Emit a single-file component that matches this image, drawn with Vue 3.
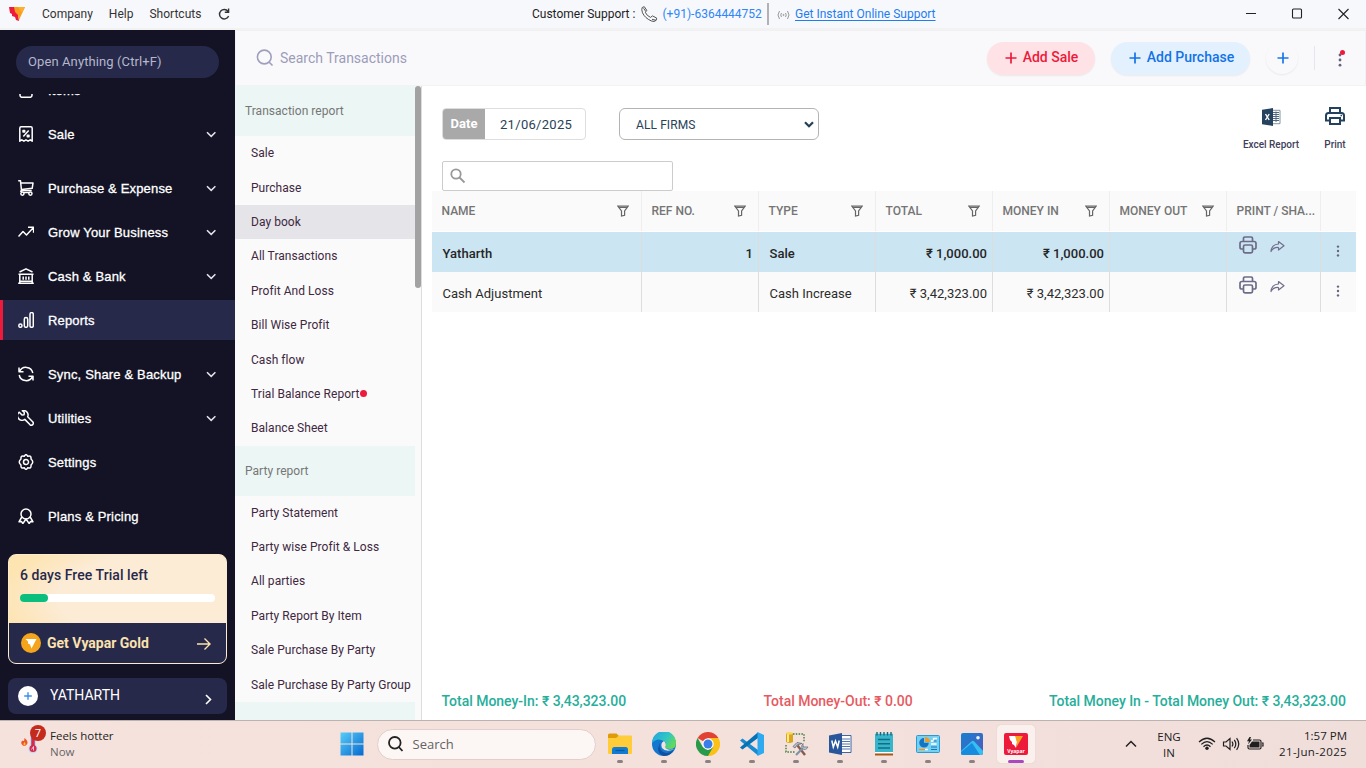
<script setup>
const chevron = 'M1 1.2 5.2 5.4 9.4 1.2'
const groups = [
  [{ label: 'Items', icon: 'items', open: true }],
  [{ label: 'Sale', icon: 'sale', open: true }],
  [
    { label: 'Purchase & Expense', icon: 'cart', open: true },
    { label: 'Grow Your Business', icon: 'grow', open: true },
    { label: 'Cash & Bank', icon: 'bank', open: true },
    { label: 'Reports', icon: 'bars', active: true },
  ],
  [
    { label: 'Sync, Share & Backup', icon: 'sync', open: true },
    { label: 'Utilities', icon: 'wrench', open: true },
    { label: 'Settings', icon: 'gear' },
  ],
  [{ label: 'Plans & Pricing', icon: 'badge' }],
]
const icons = {
  items: ['M2 2h12v11.300a2 2 0 0 1-2 2H4a2 2 0 0 1-2-2z'],
  sale: ['M1.800 15.200V2.200Q1.800.8 3.200.8h9.600q1.400 0 1.400 1.400v13l-2-1.400-2.100 1.400L8 13.800l-2.100 1.400-2.100-1.400z', 'M10.700 4.500 5.300 10.500', 'M5 4.500h1.700v1.500H5zM9.300 9.200h1.700v1.500H9.300z'],
  cart: ['M.2.8h2.300l1 9.700h10.200', 'M3 3h12l-.8 5.300-10.700 1.200', 'M3.500 10.500l-1 1.500M6 13.600a1.600 1.600 0 1 1-3.200 0 1.600 1.600 0 0 1 3.200 0zM14 13.600a1.600 1.600 0 1 1-3.200 0 1.600 1.600 0 0 1 3.200 0zM6 12.600h5'],
  grow: ['M.5 12.500 5 7.500l3.500 3.500 7-7.500M10 3.300h5.600v5.500'],
  bank: ['M1.500 4 8 .8 14.500 4M.5 6.300h15M1.800 6.300v8.200M14.200 6.300v8.200M.2 15.200h15.600M1.800 13.300h12.400', 'M5.200 8.500v3.300M8 8.500v3.300M10.800 8.500v3.300'],
  bars: ['M4 13.700a1.600 1.600 0 1 1-3.200 0 1.600 1.600 0 0 1 3.200 0zM6.300 7.200q0-1.600 1.700-1.600t1.700 1.600v6.500q0 1.600-1.700 1.600t-1.700-1.600zM12 2.200Q12 .6 13.600.6t1.700 1.600v11.500q0 1.600-1.700 1.600T12 13.700z'],
  sync: ['M1 1.500v4.300h4.500M1.500 5.600A7 7 0 0 1 14.800 7', 'M15 14.500v-4.300h-4.500M14.500 10.400A7 7 0 0 1 1.200 9'],
  wrench: ['M1.300 2.200 4 5l2.100-.2L6.300 2.500 4.300.8a4.400 4.400 0 0 1 5.400 5.900l5.200 5.300a2 2 0 0 1-2.800 2.800L6.800 9.400A4.400 4.400 0 0 1 1.300 2.200z'],
  gear: ['M6.200 2.300Q8-1 9.800 2.300 13.500 1 13 5q3.500 3 0 6 .5 4-3.200 2.700Q8 17 6.200 13.700 2.500 15 3 11q-3.500-3 0-6-.5-4 3.200-2.700z', 'M10.500 8a2.500 2.500 0 1 1-5 0 2.500 2.500 0 0 1 5 0z'],
  badge: ['M13 6a5 5 0 1 1-10 0 5 5 0 0 1 10 0z', 'M3.800 9 1 13.800l2.600-.2L4.800 15.600 8 11l3.200 4.600 1.200-2 2.600.2L12.200 9'],
}
const reports = [
  { title: 'Transaction report', items: ['Sale', 'Purchase', 'Day book', 'All Transactions', 'Profit And Loss', 'Bill Wise Profit', 'Cash flow', 'Trial Balance Report', 'Balance Sheet'] },
  { title: 'Party report', items: ['Party Statement', 'Party wise Profit & Loss', 'All parties', 'Party Report By Item', 'Sale Purchase By Party', 'Sale Purchase By Party Group'] },
]
const columns = ['NAME', 'REF NO.', 'TYPE', 'TOTAL', 'MONEY IN', 'MONEY OUT']
const rows = [
  { name: 'Yatharth', ref: '1', type: 'Sale', total: '₹ 1,000.00', moneyIn: '₹ 1,000.00', selected: true },
  { name: 'Cash Adjustment', ref: '', type: 'Cash Increase', total: '₹ 3,42,323.00', moneyIn: '₹ 3,42,323.00' },
]
</script>

<template>
  <div class="screen">
    <header class="titlebar">
      <svg class="brand" width="16" height="15" viewBox="0 0 16 15">
        <path d="M0 0h8l2 14-3-1-1-3-3-1V7L1 6z" fill="#ed1a3b" />
        <path d="M5 0h11l-6 13-1-5-3-3z" fill="#f99d1c" /><path d="M9 0h7l-3 6z" fill="#fbb12f" />
      </svg>
      <nav class="menus"><span>Company</span><span>Help</span><span>Shortcuts</span></nav>
      <svg class="reload" width="12" height="13" viewBox="0 0 12 13" fill="none" stroke="#333" stroke-width="1.4"><path d="M10 3.4A4.7 4.7 0 1 0 10.6 8M10.6.6v3.7H6.8" /></svg>
      <div class="support">
        <span class="cs">Customer Support :</span>
        <svg width="17" height="17" viewBox="0 0 17 17" fill="none" stroke="#555" stroke-width="1"><path d="M1.2 1.5 3.3.7l2.6 3.8-1.7 1.7q1.5 3.5 5.3 5.2l2-1.5 4.2 2.2-.5 2.2q-2 2.1-5 .6Q3.800 12 1.500 6.800.2 3.300 1.200 1.500zM2.600 2.300l2.200 3.200M11 13.300l4 1" /></svg>
        <span class="tel">(+91)-6364444752</span>
        <i class="bar"></i>
        <svg class="live" width="13" height="10" viewBox="0 0 13 10" fill="none" stroke="#999" stroke-width="1"><path d="M2.500 1Q-.5 5 2.500 9M4.500 3Q3 5 4.500 7M8.500 3Q10 5 8.500 7M10.500 1Q13.500 5 10.500 9" /><circle cx="6.500" cy="5" r=".6" /></svg>
        <span class="help">Get Instant Online Support</span>
      </div>
      <svg class="winctl" width="104" height="12" viewBox="0 0 104 12" fill="none" stroke="#222" stroke-width="1.100"><path d="M0 5.500h10M92.500 1l10 10M102.500 1l-10 10" /><rect x="46.500" y="1" width="9" height="9" rx="1" /></svg>
    </header>

    <div class="body">
      <aside class="sidebar">
        <div class="open">Open Anything (Ctrl+F)</div>
        <div class="navclip">
          <div class="nav">
            <div v-for="(g, i) in groups" :key="i" class="group">
              <div v-for="it in g" :key="it.label" class="item" :class="{ active: it.active }">
                <svg width="16" height="16" viewBox="0 0 16 16" fill="none" stroke="#fff" stroke-width="1.500" stroke-linejoin="round">
                  <path v-for="d in icons[it.icon]" :key="d" :d="d" />
                </svg>
                <span>{{ it.label }}</span>
                <svg v-if="it.open" class="chev" width="11" height="7" viewBox="0 0 11 7" fill="none" stroke="#e4e4ec" stroke-width="1.500"><path :d="chevron" /></svg>
              </div>
            </div>
          </div>
        </div>
        <div class="trial">
          <div class="days">6 days Free Trial left</div>
          <div class="progress"><i></i></div>
          <div class="gold">
            <svg width="20" height="20" viewBox="0 0 20 20"><circle cx="10" cy="10" r="10" fill="#f5a51b" /><path d="M4.500 6h11l-5 9.500-1.500-4-2-1V8.500z" fill="#fff" /></svg>
            <span>Get Vyapar Gold</span>
            <svg class="arrow" width="14" height="12" viewBox="0 0 14 12" fill="none" stroke="#fbe2ae" stroke-width="1.400"><path d="M0 6h13M7.500.5 13 6l-5.500 5.500" /></svg>
          </div>
        </div>
        <div class="firm">
          <svg width="20" height="20" viewBox="0 0 20 20"><circle cx="10" cy="10" r="10" fill="#fff" /><path d="M6.200 10h7.600M10 6.200v7.600" stroke="#3b8fec" stroke-width="1.400" /></svg>
          <span>YATHARTH</span>
          <svg class="next" width="7" height="11" viewBox="0 0 7 11" fill="none" stroke="#fff" stroke-width="1.600"><path d="M1 1l4.500 4.500L1 10" /></svg>
        </div>
      </aside>

      <section class="app">
        <div class="topbar">
          <svg width="18" height="18" viewBox="0 0 18 18" fill="none" stroke="#9f9fbd" stroke-width="1.600"><circle cx="8.300" cy="8" r="6.900" /><path d="M13 13l3.500 3.500" /></svg>
          <span class="ph">Search Transactions</span>
          <div class="pill sale"><svg width="12" height="12" viewBox="0 0 12 12" stroke="currentColor" stroke-width="1.700"><path d="M.5 6h11M6 .5v11" /></svg>Add Sale</div>
          <div class="pill purchase"><svg width="12" height="12" viewBox="0 0 12 12" stroke="currentColor" stroke-width="1.700"><path d="M.5 6h11M6 .5v11" /></svg>Add Purchase</div>
          <div class="round"><svg width="12" height="12" viewBox="0 0 12 12" stroke="#1878ea" stroke-width="1.700"><path d="M.5 6h11M6 .5v11" /></svg></div>
          <i class="rule"></i>
          <svg class="more" width="10" height="20" viewBox="0 0 10 20"><g fill="#62627c"><circle cx="3" cy="7" r="1.400" /><circle cx="3" cy="12" r="1.400" /><circle cx="3" cy="17.200" r="1.400" /></g><circle cx="5.500" cy="4.500" r="2.500" fill="#ed1a3b" /></svg>
        </div>

        <div class="workspace">
          <div class="reports">
            <div v-for="g in reports" :key="g.title">
              <div class="rtitle">{{ g.title }}</div>
              <div v-for="r in g.items" :key="r" class="report" :class="{ current: r === 'Day book' }">{{ r }}<i v-if="r === 'Trial Balance Report'"></i></div>
            </div>
            <div class="rtitle"></div>
          </div>
          <div class="track"><i></i></div>

          <main class="main">
            <div class="filters">
              <div class="date"><b>Date</b><span>21/06/2025</span></div>
              <div class="select"><span>ALL FIRMS</span><svg width="10" height="7" viewBox="0 0 10 7" fill="none" stroke="#234057" stroke-width="2.200"><path d="M1 1.200l4 4 4-4" /></svg></div>
              <div class="action excel">
                <svg width="19" height="18" viewBox="0 0 19 18"><path d="M10 2.300h8v13.400h-8" fill="#fff" stroke="#65788a" stroke-width=".8" /><path d="M11 4.500h6M11 6.500h6M11 8.500h6M11 10.500h6M11 12.500h6M14 3.500v10.500" stroke="#536a80" /><path d="M0 1.800 11 0v18L0 16.200z" fill="#26425e" /><path d="M3.500 6 7.200 12M7.200 6 3.500 12" stroke="#fff" stroke-width="1.400" /></svg>
                <span>Excel Report</span>
              </div>
              <div class="action print">
                <svg width="20" height="18" viewBox="0 0 20 18" fill="none" stroke="#24425e" stroke-width="2"><path d="M5 6V1h10v5M5 13.500H1V8.500Q1 6 3.500 6h13Q19 6 19 8.500v5h-4M5 11h10v6H5z" /><path d="M15.500 8.500h1.500" stroke-width="1.500" /></svg>
                <span>Print</span>
              </div>
            </div>
            <div class="find"><svg width="16" height="16" viewBox="0 0 16 16" fill="none" stroke="#999" stroke-width="1.800"><circle cx="6" cy="6" r="4.700" /><path d="M9.500 9.500l5 5" /></svg></div>

            <div class="grid">
              <div class="row head">
                <div v-for="c in columns" :key="c" class="cell"><span>{{ c }}</span><svg width="12" height="12" viewBox="0 0 12 12" fill="none" stroke="#666" stroke-width="1.200"><path d="M.8 1h10.400L7.600 6v4.300L4.500 11V6zM1.500 2.400h9" /></svg></div>
                <div class="cell"><span>PRINT / SHA...</span></div>
                <div class="cell"></div>
              </div>
              <div v-for="r in rows" :key="r.name" class="row" :class="{ selected: r.selected }">
                <div class="cell">{{ r.name }}</div>
                <div class="cell num">{{ r.ref }}</div>
                <div class="cell">{{ r.type }}</div>
                <div class="cell num">{{ r.total }}</div>
                <div class="cell num">{{ r.moneyIn }}</div>
                <div class="cell"></div>
                <div class="cell tools">
                  <svg width="18" height="18" viewBox="0 0 18 18" fill="none" stroke="#6c6c89" stroke-width="1.700" stroke-linejoin="round"><path d="M4.500 5.500V2.300Q4.500 1 5.800 1h6.400q1.300 0 1.300 1.300v3.200M4.500 13H2.800Q1 13 1 11.200V7.500q0-2 2-2h12q2 0 2 2v3.700q0 1.800-1.800 1.800h-1.700M6 9h6q1.500 0 1.500 1.500v4.800q0 1.500-1.500 1.500H6q-1.500 0-1.500-1.500v-4.800Q4.500 9 6 9z" /></svg>
                  <svg width="15" height="13" viewBox="0 0 15 13" fill="none" stroke="#6f6f8c" stroke-width="1.200" stroke-linejoin="round"><path d="M8.500 1.500 14 5.800 8.500 10V7.500Q3.500 7 1 11.500 1.500 4.500 8.500 4z" /></svg>
                </div>
                <div class="cell dots"><svg width="4" height="12" viewBox="0 0 4 12" fill="#66667f"><circle cx="2" cy="1.600" r="1.200" /><circle cx="2" cy="6" r="1.200" /><circle cx="2" cy="10.400" r="1.200" /></svg></div>
              </div>
            </div>

            <footer class="totals">
              <span>Total Money-In: ₹ 3,43,323.00</span>
              <span class="out">Total Money-Out: ₹ 0.00</span>
              <span class="net">Total Money In - Total Money Out: ₹ 3,43,323.00</span>
            </footer>
          </main>
        </div>
      </section>
    </div>

    <div class="taskbar">
      <div class="weather">
        <svg width="28" height="28" viewBox="0 0 28 28"><path d="M4.500 9q4 3 2.700 6-3 4-5.700 0-1-3 1.500-3.500.5 1 1.200 0z" fill="#ed5527" /><path d="M4.500 13q2 2 0 3.500-2-1 0-3.500" fill="#ffc43c" /><path d="M10 6h6v10q3 4 0 7-3 2.500-6.500 0-2.500-4 .5-7z" fill="#bddcf5" /><path d="M13 7v12" stroke="#d52a4d" stroke-width="3.500" /><circle cx="13" cy="19.500" r="3.500" fill="#d52a4d" /><path d="M11.500 20.500l2-3v4" fill="none" stroke="#fff" stroke-width=".7" /></svg>
        <b>7</b>
        <div><span>Feels hotter</span><span class="now">Now</span></div>
      </div>

      <div class="dock">
        <svg class="win" width="24" height="24" viewBox="0 0 24 24"><defs><linearGradient id="w" x2="1" y2="1"><stop stop-color="#56cdf9" /><stop offset="1" stop-color="#0669cf" /></linearGradient></defs><path d="M.5.5h11v11H.5zM12.500.5h11v11h-11zM.5 12.500h11v11H.5zM12.500 12.500h11v11h-11z" fill="url(#w)" /></svg>
        <div class="search"><svg width="15" height="16" viewBox="0 0 15 16" fill="none" stroke="#222" stroke-width="1.800"><circle cx="6.800" cy="6.800" r="5.800" /><path d="M10.800 11l3.700 4" /></svg><span>Search</span></div>
        <div class="apps">
          <div class="tile"><svg width="24" height="24" viewBox="0 0 24 24"><path d="M0 3q0-1.500 1.500-1.500h7L11 4v5H0z" fill="#e09c08" /><path d="M0 6h8l3-2.500h12q1 0 1 1V21q0 1-1 1H1q-1 0-1-1z" fill="#ffcc3a" /><path d="M4 22v-4.500q0-2.500 2.500-2.500h11q2.500 0 2.500 2.500V22z" fill="#137bd1" /><path d="M7.500 18.500h9" stroke="#075b9d" stroke-width="1.200" /></svg><i></i></div>
          <div class="tile"><svg width="24" height="24" viewBox="0 0 24 24"><defs><linearGradient id="e" y2=".6"><stop stop-color="#259fe2" /><stop offset=".6" stop-color="#31c6c5" /><stop offset="1" stop-color="#65d958" /></linearGradient></defs><circle cx="12" cy="12" r="12" fill="#1177cf" /><path d="M0 11A12 12 0 0 1 24 11q0 6-6 6-6 0-5-3 2-3-1-5Q5 5 0 11z" fill="url(#e)" /><path d="M8 11q-2 8 6 10 5 0 8-4-3 7-10 7Q3 21 8 11z" fill="#124f9e" /><path d="M12 9q-4 2-2 7 4 5 13 1-8 2-10-2 2-3-1-6" fill="#f6e2dd" /></svg><i></i></div>
          <div class="tile"><svg width="24" height="24" viewBox="0 0 24 24"><path d="M12 12 1.600 6A12 12 0 0 1 22.400 6z" fill="#e24234" /><path d="M12 12V6h10.400A12 12 0 0 1 12 24z" fill="#fbc116" /><path d="M1.600 6 6.800 15 12 18l5.200-3L12 24A12 12 0 0 1 1.600 6z" fill="#29994a" /><circle cx="12" cy="12" r="5.700" fill="#fff" /><circle cx="12" cy="12" r="4.500" fill="#3b7eea" /></svg><i></i></div>
          <div class="tile"><svg width="24" height="24" viewBox="0 0 24 24"><path d="M0 8.500 2.500 6.500 18 18v5.500z" fill="#168bd2" /><path d="M0 15.500 2.500 17.500 18 6V.3z" fill="#0872b7" /><path d="M17.500 0 24 3v18l-6.500 3z" fill="#2daaf0" /></svg><i></i></div>
          <div class="tile"><svg width="26" height="26" viewBox="0 0 26 26"><path d="M10 3h11v8M3 14v7h9" fill="none" stroke="#3f7d35" stroke-width="1.400" stroke-dasharray="1.500 1.300" /><path d="M3 2h7v9q-3.500 2-7 0z" fill="#d8a61c" /><path d="M5 3v8" stroke="#ffe98b" stroke-width="2" /><ellipse cx="6.500" cy="2.300" rx="3.500" ry="1.300" fill="#f7d860" /><path d="M22 24 14.500 14.500" stroke="#8a5a48" stroke-width="2.400" /><path d="M13 24 21 16" stroke="#7b93a8" stroke-width="2.200" /><path d="M10 15.500l4-4 5 1-5 1.500-2 3z" fill="#b9c6d2" stroke="#5d6a76" stroke-width=".8" /><path d="M20 12.500v3.500h5q-2 4-6 1.500-1-3 1-5" fill="#c3cdd6" stroke="#66727d" stroke-width=".8" /></svg><i></i></div>
          <div class="tile"><svg width="24" height="24" viewBox="0 0 24 24"><path d="M12 3.500h11v17H12z" fill="#fff" stroke="#2b579a" stroke-width=".9" /><path d="M14 7h8M14 9.500h8M14 12h8M14 14.500h8M14 17h8" stroke="#5277ad" /><path d="M1 3.500 14 1v22L1 20.500z" fill="#29569b" /><path d="M3.800 8.500 5.300 15 7.500 9 9.700 15 11.200 8.500" fill="none" stroke="#fff" stroke-width="1.500" /></svg><i></i></div>
          <div class="tile"><svg width="24" height="24" viewBox="0 0 24 24"><path d="M3 1.800h18V21H3z" fill="#36b5cb" /><path d="M5 0v3.500M8.500 0v3.500M12 0v3.500M15.500 0v3.500M19 0v3.500" stroke="#17677c" stroke-width="1.400" /><path d="M6 7.500h12M6 11.800h12M6 16h12" stroke="#126f83" stroke-width="1.400" /><path d="M3 20h18v1.500H3z" fill="#fff" /><path d="M3 21.500h18v2H3z" fill="#a45a16" /></svg><i></i></div>
          <div class="tile"><svg width="24" height="24" viewBox="0 0 24 24"><rect x=".5" y="3.500" width="23" height="17" rx="1" fill="#74d1f2" stroke="#2a9ad4" /><path d="M8 6a4.800 4.800 0 1 0 4.800 4.800H8z" fill="#1674c2" /><path d="M9 5a5 5 0 0 1 5 5H9z" fill="#f39a20" /><path d="M15 9h2.500V6.500h3.500M15 12h5.500M3 17.500h9" fill="none" stroke="#fff" stroke-width="1.300" /><path d="M3 17.500h6" stroke="#ef9222" stroke-width="1.600" /><path d="M15 15h6M15 17.500h6M17.500 9h3" stroke="#1976bb" /></svg><i></i></div>
          <div class="tile"><svg width="24" height="24" viewBox="0 0 24 24"><defs><linearGradient id="p" x2="1" y2="1"><stop stop-color="#1681d2" /><stop offset="1" stop-color="#5259b8" /></linearGradient><clipPath id="pc"><rect x="1" y="1" width="22" height="22" rx="2" /></clipPath></defs><g clip-path="url(#pc)"><path d="M1 1h22v22H1z" fill="url(#p)" /><path d="M1 19 12 9q1-.6 2 .2L25 21v3H1z" fill="#35bff3" /><path d="M1 20 12 11 20 23H1z" fill="#168cdf" /></g><circle cx="18" cy="5.800" r="1.800" fill="#e6f5ff" /></svg><i></i></div>
          <div class="tile on"><div class="vy"><svg width="14" height="12" viewBox="0 0 14 12"><path d="M0 0h7l1 6-1 6-2-3-2-1V6L1 4z" fill="#fff" /><path d="M6 0h8L7.500 11 8 6z" fill="#f8a51e" /></svg><em>Vyapar</em></div><i></i></div>
        </div>
      </div>

      <svg class="up" width="12" height="8" viewBox="0 0 12 8" fill="none" stroke="#222" stroke-width="1.500"><path d="M1 6.500l5-5 5 5" /></svg>
      <div class="lang"><span>ENG</span><span>IN</span></div>
      <svg class="tray" width="66" height="16" viewBox="0 0 66 16" fill="none" stroke="#1f1f1f" stroke-width="1.200">
        <path d="M1 6Q9-1.500 17 6M3.300 8.400q5.700-5.600 11.400 0M5.500 10.700q3.500-3.400 7 0" /><circle cx="9" cy="12.300" r="1.700" fill="#1f1f1f" stroke="none" />
        <path d="M25.500 6h2.500l4-3.500v11L28 10h-2.500zM34 5.500q1.800 2.500 0 5M36.300 3.800q3 4.200 0 8.400M38.600 2.200q4.300 5.800 0 11.600" />
        <path d="M55 4h6.500q1.500 0 1.500 1.500v6q0 1.500-1.500 1.500h-10Q50 13 50 11.500V9M64 7h1v3h-1" /><path d="M54 5.500h7.500v6H51.500V9z" fill="#1f1f1f" stroke="none" /><path d="M51.500 1 49 5.200h2L50 8.500l4-5h-2l1-2.500z" fill="#1f1f1f" stroke="none" />
      </svg>
      <div class="clock"><span>1:57 PM</span><span>21-Jun-2025</span></div>
    </div>
  </div>
</template>

<style>
html, body { margin: 0; overflow: hidden; }
</style>

<style scoped>
* { box-sizing: border-box; }
svg { flex: none; display: block; }
.screen { width: 1366px; height: 768px; overflow: hidden; display: flex; flex-direction: column; background: #fff; font-family: Roboto, "Liberation Sans", sans-serif; white-space: nowrap; }
.titlebar { height: 30px; flex: none; background: #f7f8fc; border-bottom: 2px solid #f2f2f3; display: flex; align-items: center; font-size: 12px; color: #333; padding-left: 9px; }
.menus { display: flex; gap: 16px; margin-left: 17px; letter-spacing: .01px; width: 160px; }
.reload { margin-left: 16px; }
.support { display: flex; align-items: center; width: 404px; margin-left: 302px; font-size: 12px; }
.cs { color: #1e1e24; width: 109px; }
.tel { color: #2e86f7; margin-left: 4.500px; width: 100px; }
.bar { width: 2px; height: 22px; background: #b2b2b6; margin-left: 4px; }
.live { margin: 2px 5.500px 0 8px; }
.help { color: #1e7df2; text-decoration: underline; text-underline-offset: 2px; }
.winctl { margin-left: auto; margin-right: 16px; }

.body { flex: 1; display: flex; min-height: 0; }
.sidebar { width: 235px; flex: none; background: #131325; display: flex; flex-direction: column; color: #fff; }
.open { margin: 16px 16px 0; height: 32px; border-radius: 16px; background: #27294b; color: #b5b7cb; font-size: 13px; line-height: 31px; padding-left: 12px; letter-spacing: .1px; }
.navclip { margin-top: 16px; height: 460px; overflow: hidden; flex: none; }
.nav { margin-top: -24px; }
.group { display: flex; flex-direction: column; gap: 4px; margin-bottom: 14px; }
.group:first-child { margin-bottom: 4px; }
.item { height: 40px; display: flex; align-items: center; padding: 0 18px; font-family: "Liberation Sans", sans-serif; font-size: 13px; -webkit-text-stroke: .3px #fff; }
.item span { margin-left: 14px; letter-spacing: .17px; }
.item.active { background: #27294b; border-left: 3px solid #ed1a3b; padding-left: 15px; }
.chev { margin-left: auto; }
.trial { margin: 0 8px; height: 110px; flex: none; border: 1px solid #fdebcd; border-radius: 8px; overflow: hidden; background: radial-gradient(ellipse at 75% 40%, #fcebd5 0 50%, #fde4b1 75%); display: flex; flex-direction: column; }
.days { color: #27294b; font-size: 14px; font-weight: 500; padding: 12px 0 0 11px; line-height: 17px; letter-spacing: .06px; }
.progress { margin: 10px 11px 0; height: 8px; background: #fff; border-radius: 4px; }
.progress i { display: block; width: 28px; height: 8px; border-radius: 4px; background: #0abf7e; }
.gold { margin-top: auto; height: 40px; background: #27294b; display: flex; align-items: center; padding: 0 15px 0 12px; color: #fbe2ae; font-size: 14px; font-weight: 700; }
.gold span { margin-left: 6px; }
.arrow { margin-left: auto; margin-top: 1px; }
.firm { margin: 14px 8px 0; height: 36px; flex: none; border-radius: 8px; background: #27294b; display: flex; align-items: center; padding: 0 15px 0 10px; font-size: 14px; }
.firm span { margin-left: 12px; margin-top: -2px; }
.next { margin-left: auto; margin-top: 6px; }

.app { flex: 1; min-width: 0; display: flex; flex-direction: column; }
.topbar { height: 56px; flex: none; background: #f9f9fc; border: 1px solid #f1f1f3; border-bottom-color: #f3f3f3; display: flex; align-items: center; padding-left: 20px; }
.ph { color: #9c9db8; font-size: 14px; margin-left: 6px; width: 707px; }
.pill { height: 33px; border-radius: 17px; display: flex; align-items: center; justify-content: center; gap: 6px; font-size: 14px; font-weight: 500; padding: 0 0 3px 1px; box-shadow: 0 1px 2px #0001; }
.pill svg { margin-top: 3px; }
.sale { width: 108px; background: #ffe2e6; color: #ed1a3b; }
.purchase { width: 139px; background: #e3f1ff; color: #1373e6; margin-left: 16px; padding-left: 2px; }
.round { width: 32px; height: 32px; border-radius: 16px; box-shadow: 0 1px 2px #0001; margin-left: 16px; padding-left: 1px; display: grid; place-items: center; }
.rule { width: 1px; height: 24px; background: #e5e5ea; margin-left: 16px; }
.more { margin-left: 22px; }

.workspace { flex: 1; min-height: 0; display: flex; }
.reports { width: 180px; background: #fafafa; overflow: hidden; flex: none; }
.rtitle { height: 50px; background: #ebf6f5; color: #777; font-size: 12px; line-height: 50px; padding-left: 10px; letter-spacing: .03px; }
.report { height: 34.400px; line-height: 34px; padding-left: 16px; font-size: 12px; color: #40283f; display: flex; align-items: center; letter-spacing: .05px; }
.report i { width: 7px; height: 7px; border-radius: 50%; background: #ed1a3b; margin-left: 1px; }
.current { background: #e5e4e9; }
.track { width: 7px; flex: none; background: #fafafa; border-right: 1px solid #ddd; }
.track i { display: block; width: 6px; height: 202px; border-radius: 3px; background: #a2a2a2; }
.main { flex: 1; min-width: 0; background: #fff; padding: 22px 10px 0; display: flex; flex-direction: column; }
.filters { display: flex; height: 45px; padding-left: 10px; }
.date { width: 144px; height: 32px; border: 1px solid #ddd; border-radius: 4px; display: flex; line-height: 31px; overflow: hidden; }
.date b { width: 42px; background: #a9a9a9; color: #fff; text-align: center; font-size: 13px; font-weight: 700; line-height: 30px; }
.date span { margin-left: 15px; font-size: 13px; color: #284257; letter-spacing: .3px; }
.select { margin-left: 33px; width: 200px; height: 32px; border: 1px solid #b4b4b4; border-radius: 6px; display: flex; align-items: center; justify-content: space-between; padding: 1px 4px 0 16px; font-size: 12px; color: #284257; letter-spacing: .1px; }
.action { display: flex; flex-direction: column; align-items: center; font-size: 10px; color: #40405a; font-weight: 500; }
.action svg { height: 18px; }
.action span { margin-top: 13px; }
.excel { margin-left: auto; width: 60px; }
.print { width: 22px; margin: -1px 10px 0 23px; }
.print span { margin-top: 14px; }
.find { margin: 8px 0 0 10px; width: 231px; height: 30px; border: 1px solid #ccc; border-radius: 2px; padding: 6px 0 0 7px; }
.grid { width: 924px; }
.row { display: grid; grid-template-columns: 210px repeat(5, 117px) 94px 35px; height: 40px; background: #fafafa; font-size: 13px; color: #2c2c2c; }
.cell { border-right: 1px solid #ddd; padding: 3px 5px 0 10.500px; display: flex; align-items: center; min-width: 0; letter-spacing: .02px; }
.cell:last-child { border-right: 0; }
.num { justify-content: flex-end; }
.head { margin-bottom: 1px; font-size: 12px; color: #757575; }
.head .cell { border-color: #eee; padding: 0 12px 0 9.500px; justify-content: space-between; letter-spacing: .01px; font-weight: 500; }
.head .cell:nth-child(7) { padding-right: 0; }
.selected { background: #cce5f3; color: #262626; font-weight: 500; }
.row .tools { align-items: flex-start; padding: 4px 0 0 12px; gap: 13px; }
.tools svg + svg { margin-top: 4px; }
.row .dots { padding: 0 1px 2px 0; justify-content: center; }
.totals { margin-top: auto; height: 38px; padding: 0 10px 0 9.500px; display: grid; grid-template-columns: 322px auto 1fr; align-items: center; font-size: 14px; font-weight: 500; color: #27ae9b; letter-spacing: -.02px; }
.out { color: #e65a61; }
.net { text-align: right; }

.taskbar { height: 48px; flex: none; border-top: 1px solid #bcb3b0; background: linear-gradient(90deg, #f6e2dd, #f5e1dc 50%, #f0dedb); display: flex; align-items: center; font-family: "Open Sans", "Noto Sans", sans-serif; font-size: 12px; color: #222; padding-bottom: 1px; }
.weather { display: flex; position: relative; width: 338px; padding-left: 20px; }
.weather b { position: absolute; left: 30px; top: -4px; width: 16px; height: 16px; border-radius: 8px; background: #c42b1c; color: #fff; font-size: 11px; line-height: 16px; text-align: center; font-weight: 400; }
.weather div { display: flex; flex-direction: column; line-height: 16px; margin: -1px 0 -1px 2px; font-size: 11.500px; }
.weather .now { color: #666; }
.dock { display: flex; align-items: center; }
.win { margin-left: 1.500px; }
.search { margin-left: 13px; width: 219px; height: 31px; border-radius: 16px; border: 1px solid #e3cfca; background: #fcf6f4; display: flex; align-items: center; color: #636363; padding-left: 10px; }
.search span { margin-left: 10px; font-size: 13px; }
.apps { display: flex; margin-left: 5.500px; gap: 6px; }
.tile { width: 38px; height: 38px; border-radius: 4px; display: flex; align-items: center; justify-content: center; position: relative; }
.tile > i { position: absolute; bottom: 0; left: 16px; width: 6px; height: 3px; border-radius: 2px; background: #8c8180; }
.tile.on { background: #faf0ee; box-shadow: 0 0 1px #c9b9b5; }
.tile.on > i { left: 11px; width: 16px; background: #aa49bf; }
.vy { width: 24px; height: 22px; border-radius: 2px; background: #ed1a3b; display: flex; flex-direction: column; align-items: center; padding-top: 3px; }
.vy em { font-style: normal; font-size: 5px; line-height: 6px; color: #fff; font-weight: 700; }
.up { margin-left: 90px; }
.lang { width: 40px; margin: 1px 0 0 12px; text-align: center; display: flex; flex-direction: column; line-height: 16px; font-size: 11.500px; }
.tray { margin-left: 9px; }
.clock { margin-left: auto; margin-right: 19px; display: flex; flex-direction: column; text-align: right; line-height: 16px; font-size: 11.500px; }
.clock span:last-child { letter-spacing: .35px; }
</style>
